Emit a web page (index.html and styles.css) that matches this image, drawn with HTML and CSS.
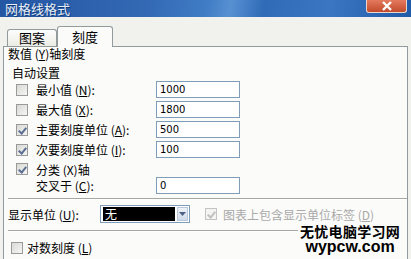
FILE: index.html
```html
<!DOCTYPE html>
<html lang="zh-CN">
<head>
    <meta charset="UTF-8">
    <title>网格线格式</title>
    <link rel="stylesheet" href="styles.css">
</head>
<body>
<div class="window">
    <div class="titlebar">
        <span class="title">网格线格式</span>
        <span class="close">
            <svg width="14" height="10" viewBox="0 0 14 10"><path d="M3 1 L11 9 M11 1 L3 9" stroke="#fff" stroke-width="2.4"/></svg>
        </span>
    </div>

    <div class="tabs">
        <div class="tab">图案</div>
        <div class="tab active">刻度</div>
    </div>

    <div class="panel">
        <div class="group-title">数值 (<u>Y</u>)轴刻度</div>
        <div class="sub">自动设置</div>

        <div class="row">
            <span class="check"></span>
            <span class="label">最小值 (<u>N</u>):</span>
            <span class="field">1000</span>
        </div>
        <div class="row">
            <span class="check"></span>
            <span class="label">最大值 (<u>X</u>):</span>
            <span class="field">1800</span>
        </div>
        <div class="row">
            <span class="check on"></span>
            <span class="label">主要刻度单位 (<u>A</u>):</span>
            <span class="field">500</span>
        </div>
        <div class="row">
            <span class="check on"></span>
            <span class="label">次要刻度单位 (<u>I</u>):</span>
            <span class="field">100</span>
        </div>
        <div class="row short">
            <span class="check on"></span>
            <span class="label">分类 (X)轴</span>
        </div>
        <div class="row">
            <span class="check blank"></span>
            <span class="label">交叉于 (<u>C</u>):</span>
            <span class="field">0</span>
        </div>

        <div class="sep"></div>

        <div class="row units">
            <span class="unit-label">显示单位 (<u>U</u>):</span>
            <span class="combo">
                <span class="combo-value">无</span>
                <span class="combo-btn">
                    <svg width="7" height="4" viewBox="0 0 7 4"><path d="M0 0 H7 L3.5 4 Z" fill="#4d6185"/></svg>
                </span>
            </span>
            <span class="check on disabled"></span>
            <span class="muted">图表上包含显示单位标签 (<u>D</u>)</span>
        </div>

        <div class="sep second"></div>

        <div class="row opt">
            <span class="check"></span>
            <span class="label">对数刻度 (<u>L</u>)</span>
        </div>
        <div class="row opt">
            <span class="check"></span>
            <span class="label">数值次序反转 (<u>R</u>)</span>
        </div>
    </div>

    <div class="watermark">
        <div class="wm-cn">无忧电脑学习网</div>
        <div class="wm-en">wypcw.com</div>
    </div>
</div>
</body>
</html>
```

FILE: styles.css
```css
body {
    margin: 0;
    background: #f0f0ec;
    font-family: "Noto Sans CJK SC", "Liberation Sans", sans-serif;
    font-size: 12px;
    color: #000;
}

.window {
    position: relative;
    width: 411px;
    height: 259px;
    overflow: hidden;
    background: #f1f1ee;
}

.titlebar {
    height: 17px;
    display: flex;
    align-items: flex-start;
    padding-left: 5px;
    background: linear-gradient(100deg, #2457a3 0%, #3368b3 35%, #3f7cc4 50%, #5890d2 56%, #2f6bb7 64%, #3a76c2 80%, #1f5aa8 100%);
}

.title {
    color: #e8eef8;
    font-size: 13px;
    line-height: 17px;
    text-shadow: 1px 1px 0 #0f3a78;
}

.close {
    margin-left: auto;
    margin-right: 4px;
    width: 41px;
    height: 13px;
    display: flex;
    align-items: center;
    justify-content: center;
    box-sizing: border-box;
    border: 1px solid #e9d7cf;
    border-top: none;
    border-radius: 0 0 3px 3px;
    background: linear-gradient(#e47a5e, #c24a2c);
}

.tabs {
    height: 29px;
    display: flex;
    align-items: flex-end;
    padding-left: 7px;
}

.tab {
    width: 50px;
    height: 17px;
    box-sizing: border-box;
    border: 1px solid #919b9c;
    border-bottom: none;
    border-radius: 3px 3px 0 0;
    background: linear-gradient(#fdfdfd, #ececE6);
    text-align: center;
    line-height: 16px;
    font-size: 13px;
}

.tab.active {
    width: 56px;
    height: 21px;
    margin-bottom: -1px;
    background: #fbfbf9;
    line-height: 19px;
    position: relative;
    z-index: 1;
}

.panel {
    margin-left: 3px;
    width: 399px;
    height: 240px;
    border: 1px solid #919b9c;
    padding-left: 4px;
    background: #fbfbf9;
    box-sizing: content-box;
}

.group-title {
    height: 14px;
    line-height: 14px;
}

.sub {
    margin-top: 5px;
    padding-left: 4px;
    height: 14px;
    line-height: 14px;
}

.row {
    display: flex;
    align-items: center;
    height: 17px;
    margin-top: 3px;
    padding-left: 8px;
}

.sub + .row {
    margin-top: 1px;
}

.row.short {
    height: 16px;
}

.row.short + .row {
    margin-top: 0;
}

.check {
    flex: none;
    width: 12px;
    height: 12px;
    box-sizing: border-box;
    border: 1px solid #9a9a9a;
    background: linear-gradient(135deg, #d8d8d4, #f6f6f4);
    position: relative;
}

.check.on::after {
    content: "";
    position: absolute;
    left: 3px;
    top: 1px;
    width: 3px;
    height: 6px;
    border: solid #5c6f93;
    border-width: 0 2px 2px 0;
    transform: rotate(40deg);
}

.check.blank {
    visibility: hidden;
}

.check.disabled {
    border-color: #c4c4c4;
    background: #f4f4f2;
}

.check.disabled::after {
    border-color: #c0c0c0;
}

.label {
    margin-left: 8px;
    width: 120px;
    white-space: nowrap;
}

.field {
    width: 84px;
    height: 17px;
    box-sizing: border-box;
    border: 1px solid #7f9db9;
    background: #fff;
    padding-left: 3px;
    font-family: "DejaVu Sans", sans-serif;
    font-size: 10px;
    line-height: 15px;
}

.sep {
    margin-top: 4px;
    height: 1px;
    background: #a7a7a2;
    border-bottom: 1px solid #fff;
}

.sep.second {
    margin-top: 7px;
    margin-right: 100px;
}

.row.units {
    margin-top: 5px;
    height: 18px;
    padding-left: 0;
}

.unit-label {
    width: 92px;
}

.combo {
    width: 90px;
    height: 18px;
    box-sizing: border-box;
    border: 1px solid #7f9db9;
    background: #fff;
    display: flex;
    align-items: center;
    padding: 1px;
}

.combo-value {
    flex: 1;
    height: 14px;
    margin-left: 1px;
    background: #000;
    color: #fff;
    line-height: 14px;
    padding-left: 2px;
}

.combo-btn {
    width: 11px;
    height: 14px;
    margin-left: 2px;
    box-sizing: border-box;
    border: 1px solid #b9c7dc;
    background: linear-gradient(#eef2f8, #cfd9e8);
    display: flex;
    align-items: center;
    justify-content: center;
}

.units .check {
    margin-left: 15px;
}

.muted {
    margin-left: 6px;
    color: #a9a9a9;
    white-space: nowrap;
}

.row.opt {
    padding-left: 3px;
    margin-top: 7px;
}

.row.opt + .row.opt {
    margin-top: 2px;
}

.row.opt .label {
    margin-left: 4px;
}

.watermark {
    position: absolute;
    left: 298px;
    top: 224px;
    padding: 0 2px;
    text-align: center;
    white-space: nowrap;
    background: #fbfbf9;
}

.wm-cn {
    font-size: 14px;
    font-weight: bold;
    line-height: 15px;
    letter-spacing: 0.3px;
}

.wm-en {
    font-family: "Liberation Sans", sans-serif;
    font-size: 16px;
    font-weight: bold;
    line-height: 15px;
}
```
